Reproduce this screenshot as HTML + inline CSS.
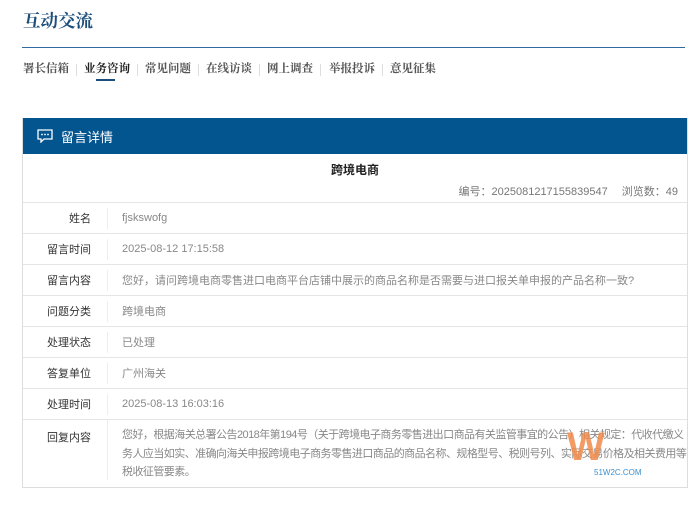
<!DOCTYPE html>
<html><head><meta charset="utf-8"><style>
*{margin:0;padding:0;box-sizing:border-box}
body{width:700px;height:506px;background:#fff;font-family:"Liberation Sans","Noto Sans CJK SC",sans-serif;position:relative;overflow:hidden}
.title{position:absolute;left:23px;top:8px;font-family:"Liberation Serif","Noto Serif CJK SC",serif;font-weight:bold;font-size:17.5px;color:#1d4f7c}
.hr{position:absolute;left:22px;top:47px;width:663px;height:1px;background:#2f6aa0}
.nav{position:absolute;top:62px;font-family:"Liberation Serif","Noto Serif CJK SC",serif;font-weight:bold;font-size:11.5px;color:#555;white-space:nowrap;line-height:14px}
.sep{position:absolute;top:64px;width:1px;height:12px;background:#ddd}
.nav.a{color:#222}
.ul{position:absolute;left:96px;top:79px;width:19px;height:2px;background:#1d4f7c}
.panel{position:absolute;left:22px;top:118px;width:666px;height:370px;border:1px solid #ddd;border-top:none;overflow:hidden}
.hd{height:36px;background:#03558f;color:#fff;font-size:13px;display:flex;align-items:center;padding-left:14px}
.hd svg{margin-right:8px}
.h2{text-align:center;font-weight:bold;font-size:12px;color:#222;margin-top:7px;height:18px}
.meta{text-align:right;font-size:11px;color:#777;padding-right:9px;margin-top:4px;height:19px}
.meta b{font-weight:normal;margin-left:14px}
.row{display:flex;border-top:1px solid #e5e5e5;font-size:11px;min-height:31px;align-items:center}
.row .l{width:68px;flex-shrink:0;text-align:right;color:#333}
.row .v{margin-left:16px;border-left:1px solid #eee;padding-left:14px;color:#888;flex:1;min-width:0;height:21px;display:flex;align-items:center}
.row.last{align-items:flex-start;height:67px}
.row.last .l{padding-top:9px}
.row.last .v{display:block;line-height:18.5px;padding-top:6px;height:60px;white-space:nowrap;letter-spacing:-0.55px}
.wm{position:absolute;left:567px;top:425px;color:#f08a4b;font-weight:bold;font-size:40px;opacity:.85}
.wm2{position:absolute;left:594px;top:468px;color:#3a8fd0;font-size:8px}
</style></head><body>
<div class="title">互动交流</div>
<div class="hr"></div>
<div class="nav" style="left:23px">署长信箱</div><div class="sep" style="left:76px"></div>
<div class="nav a" style="left:84px">业务咨询</div><div class="sep" style="left:137px"></div>
<div class="nav" style="left:145px">常见问题</div><div class="sep" style="left:198px"></div>
<div class="nav" style="left:206px">在线访谈</div><div class="sep" style="left:259px"></div>
<div class="nav" style="left:267px">网上调查</div><div class="sep" style="left:320px"></div>
<div class="nav" style="left:329px">举报投诉</div><div class="sep" style="left:382px"></div>
<div class="nav" style="left:390px">意见征集</div>
<div class="ul"></div>
<div class="panel">
<div class="hd"><svg width="16" height="14" viewBox="0 0 16 14"><path d="M1 1h14v9H7l-3 3v-3H1z" fill="none" stroke="#fff" stroke-width="1.3"/><circle cx="5" cy="5.5" r=".9" fill="#fff"/><circle cx="8" cy="5.5" r=".9" fill="#fff"/><circle cx="11" cy="5.5" r=".9" fill="#fff"/></svg>留言详情</div>
<div class="h2">跨境电商</div>
<div class="meta">编号：2025081217155839547<b>浏览数：49</b></div>
<div class="row"><div class="l">姓名</div><div class="v">fjskswofg</div></div>
<div class="row"><div class="l">留言时间</div><div class="v">2025-08-12 17:15:58</div></div>
<div class="row"><div class="l">留言内容</div><div class="v">您好，请问跨境电商零售进口电商平台店铺中展示的商品名称是否需要与进口报关单申报的产品名称一致?</div></div>
<div class="row"><div class="l">问题分类</div><div class="v">跨境电商</div></div>
<div class="row"><div class="l">处理状态</div><div class="v">已处理</div></div>
<div class="row"><div class="l">答复单位</div><div class="v">广州海关</div></div>
<div class="row"><div class="l">处理时间</div><div class="v">2025-08-13 16:03:16</div></div>
<div class="row last"><div class="l">回复内容</div><div class="v">您好，根据海关总署公告2018年第194号（关于跨境电子商务零售进出口商品有关监管事宜的公告）相关规定：代收代缴义<br>务人应当如实、准确向海关申报跨境电子商务零售进口商品的商品名称、规格型号、税则号列、实际交易价格及相关费用等<br>税收征管要素。</div></div>
</div>
<div class="wm">W</div><div class="wm2">51W2C.COM</div>
</body></html>
